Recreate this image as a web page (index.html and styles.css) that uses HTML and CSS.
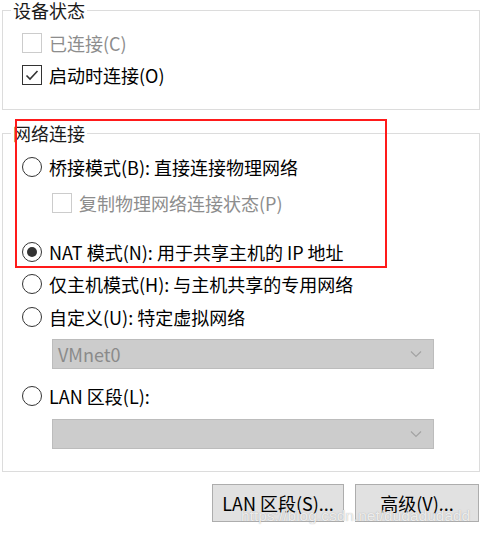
FILE: index.html
```html
<!DOCTYPE html>
<html lang="zh-CN">
<head>
<meta charset="utf-8">
<link rel="stylesheet" href="styles.css">
</head>
<body>
<div class="page">
  <fieldset class="group g1">
    <legend>设备状态</legend>
    <div class="row r-c disabled">
      <span class="check dis"></span><span class="label">已连接(C)</span>
    </div>
    <div class="row r-o">
      <span class="check on"><svg width="18" height="18" viewBox="0 0 18 18"><polyline points="3.5,9.5 7,13 14.5,5" fill="none" stroke="#333" stroke-width="1.6"/></svg></span><span class="label">启动时连接(O)</span>
    </div>
  </fieldset>

  <fieldset class="group g2">
    <legend>网络连接</legend>
    <div class="row r-b">
      <span class="radio"></span><span class="label">桥接模式(B): 直接连接物理网络</span>
    </div>
    <div class="row r-p sub disabled">
      <span class="check dis"></span><span class="label">复制物理网络连接状态(P)</span>
    </div>
    <div class="row r-n">
      <span class="radio sel"></span><span class="label">NAT 模式(N): 用于共享主机的 IP 地址</span>
    </div>
    <div class="row r-h">
      <span class="radio"></span><span class="label">仅主机模式(H): 与主机共享的专用网络</span>
    </div>
    <div class="row r-u">
      <span class="radio"></span><span class="label">自定义(U): 特定虚拟网络</span>
    </div>
    <div class="select s1"><span class="sel-text">VMnet0</span><svg class="chev" width="12" height="8" viewBox="0 0 12 8"><polyline points="1,1.5 6,6.5 11,1.5" fill="none" stroke="#a3a3a3" stroke-width="1.2"/></svg></div>
    <div class="row r-l">
      <span class="radio"></span><span class="label">LAN 区段(L):</span>
    </div>
    <div class="select s2"><span class="sel-text"></span><svg class="chev" width="12" height="8" viewBox="0 0 12 8"><polyline points="1,1.5 6,6.5 11,1.5" fill="none" stroke="#a3a3a3" stroke-width="1.2"/></svg></div>
  </fieldset>

  <div class="buttons">
    <button class="btn b-lan">LAN 区段(S)...</button>
    <button class="btn b-adv">高级(V)...</button>
  </div>

  <div class="redbox"></div>
  <div class="watermark">https://blog.csdn.net/dudadudadd</div>
</div>
</body>
</html>
```

FILE: styles.css
```css
* { box-sizing: border-box; }
html, body { margin: 0; padding: 0; background: #fff; }
body {
  font-family: "Noto Sans CJK SC", "Noto Sans", sans-serif;
  font-size: 18px;
  color: #000;
  width: 485px;
  height: 537px;
  overflow: hidden;
}
.page { position: relative; width: 485px; height: 537px; }

.group {
  margin: 0 0 0 2px;
  width: 478px;
  border: 1px solid #dcdcdc;
  padding: 0;
  min-width: 0;
}
.group legend {
  margin-left: 8px;
  padding: 0 2px;
  font-size: 18px;
  line-height: 21px;
  color: #1a1a1a;
}
.g1 { padding-top: 6px; padding-bottom: 18px; }
.g2 { margin-top: 13px; padding-top: 8px; padding-bottom: 22px; }

.row {
  display: flex;
  align-items: center;
  height: 30px;
  padding-left: 19px;
  gap: 7px;
  line-height: 20px;
  white-space: nowrap;
}
.row .label { font-size: 18px; }
.r-c { height: 32px; }
.r-o { height: 32px; }
.disabled .label { color: #8d8d8d; }
.sub { padding-left: 49px; }
.r-p { margin-top: 6px; }
.r-n { margin-top: 19px; }
.r-h { margin-top: 2px; }
.r-u { margin-top: 3px; }
.r-l { margin-top: 12px; }

.check {
  width: 20px; height: 20px;
  border: 1px solid #333;
  background: #fff;
  display: flex; align-items: center; justify-content: center;
  flex: none;
}
.check.dis { border-color: #cccccc; }
.radio {
  width: 20px; height: 20px;
  border: 1.3px solid #333;
  border-radius: 50%;
  background: #fff;
  flex: none;
  display: flex; align-items: center; justify-content: center;
}
.radio.sel::after {
  content: "";
  width: 10px; height: 10px;
  border-radius: 50%;
  background: #333;
}

.select {
  margin-left: 49px;
  width: 382px;
  height: 30px;
  background: #cccccc;
  border: 1px solid #bcbcbc;
  display: flex;
  align-items: center;
  justify-content: space-between;
  padding: 0 11px 0 5px;
}
.s1 { margin-top: 7px; }
.s2 { margin-top: 8px; }
.sel-text { color: #8a8a8a; font-size: 18px; line-height: 20px; }

.buttons {
  display: flex;
  justify-content: flex-end;
  gap: 11px;
  margin-top: 12px;
  padding-right: 6px;
}
.btn {
  font-family: "Noto Sans CJK SC", "Noto Sans", sans-serif;
  font-size: 18px;
  line-height: 20px;
  color: #000;
  background: #e1e1e1;
  border: 1px solid #adadad;
  height: 38px;
  padding: 0;
}
.b-lan { width: 132px; }
.b-adv { width: 124px; }

.redbox {
  position: absolute;
  left: 15px; top: 119px;
  width: 372px; height: 149px;
  border: 2px solid #ff1a1a;
  pointer-events: none;
}
.watermark {
  position: absolute;
  left: 241px; top: 507px;
  font-family: "Liberation Sans", Arial, sans-serif;
  font-size: 15.5px;
  color: rgba(255,255,255,0.8);
  text-shadow: 0 0 1px rgba(130,130,130,0.7);
  white-space: nowrap;
}
```
